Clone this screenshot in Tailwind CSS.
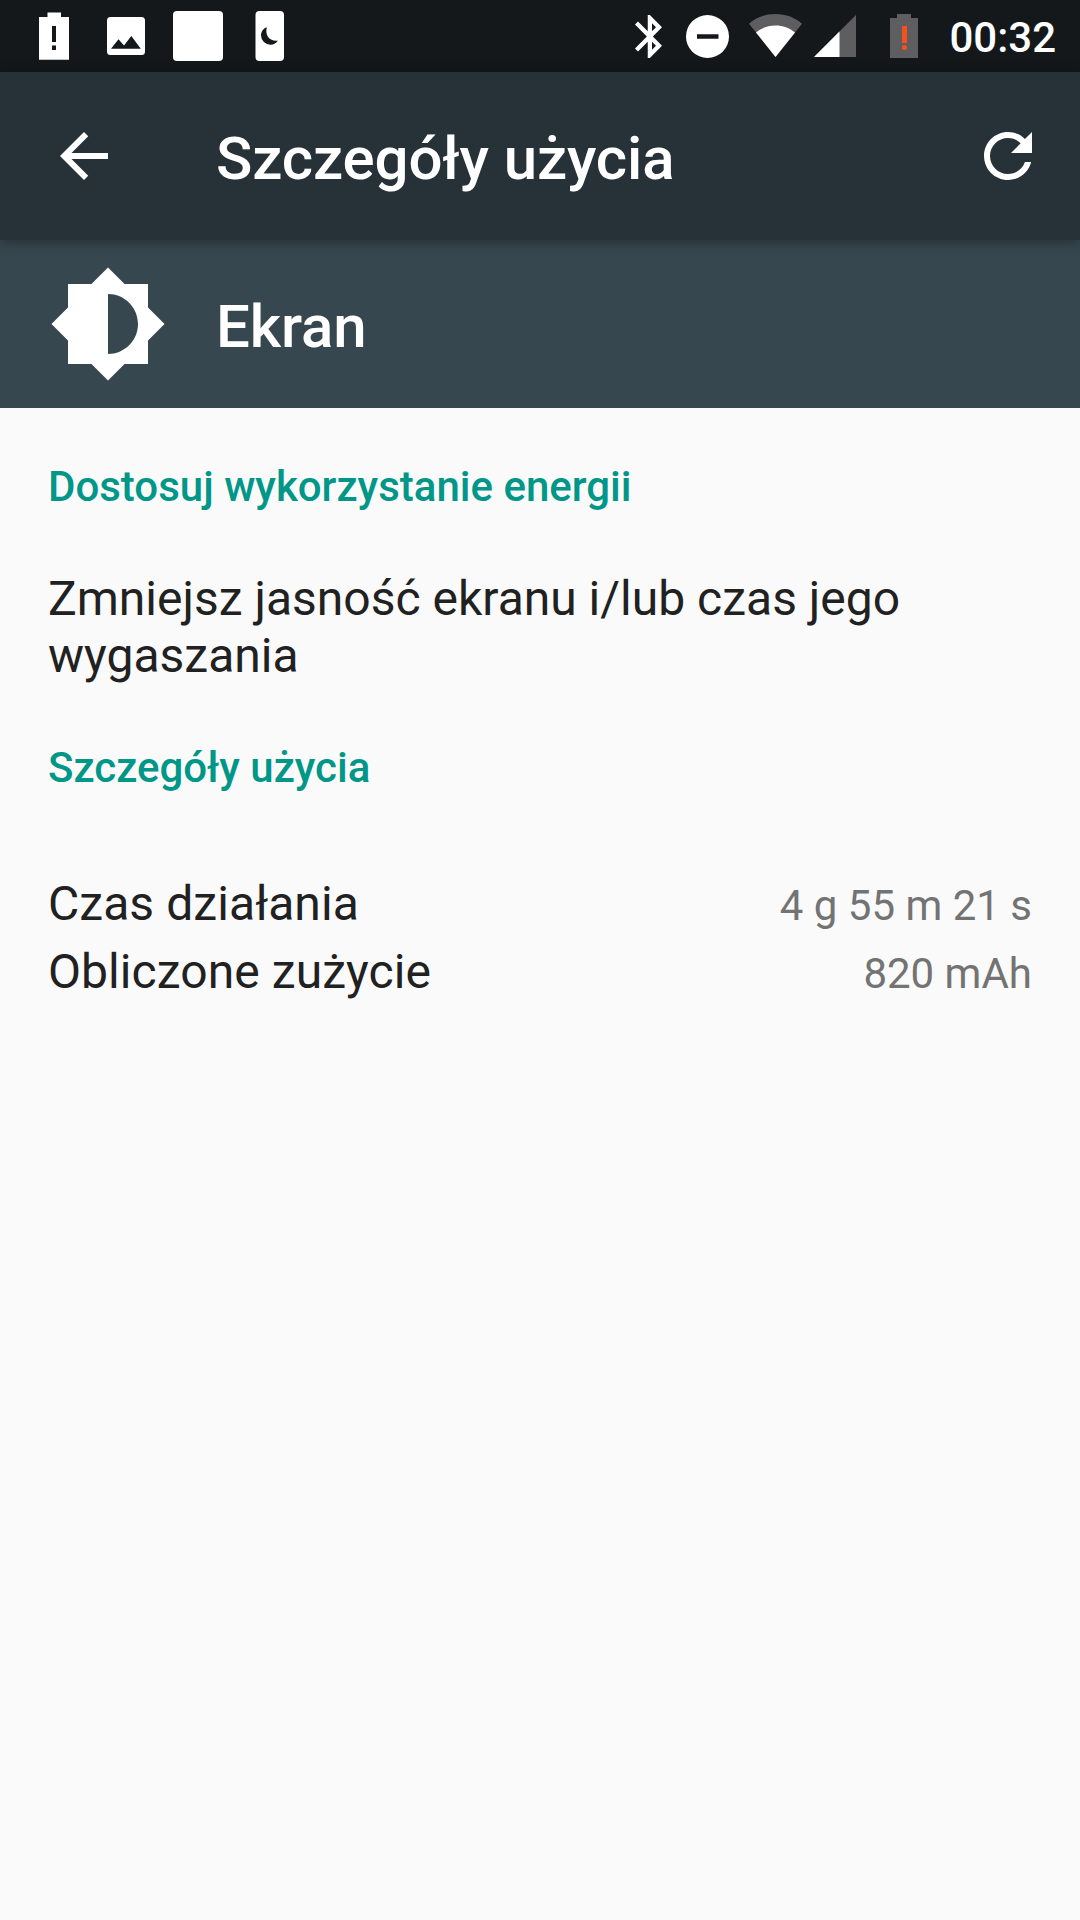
<!DOCTYPE html>
<html lang="pl">
    <head>
        <title>Szczegóły użycia</title>
        <meta charset="UTF-8" />
        <meta name="viewport" content="width=device-width, initial-scale=1.0" />
        <script src="https://cdn.jsdelivr.net/npm/@tailwindcss/browser@4"></script>
    </head>
    <body class="bg-[#fafafa]">
        <div class="flex flex-col w-full min-h-screen bg-[#fafafa] text-[#212121] font-['Roboto',sans-serif]">
            <!-- status bar -->
            <div class="flex justify-between h-[72px] pl-[39px] pr-6 bg-[#14181b] text-white">
                <div class="flex">
                    <svg class="w-[30px] h-[72px] mr-[38px]" viewBox="0 0 30 72" fill="currentColor">
                        <path fill-rule="evenodd" d="M8.500 12.500h13.500v4.500h8v42.700H0V17h8.500zM13 26v16h4V26zM13 45.500v4.500h4v-4.500z" />
                    </svg>
                    <svg class="w-[38px] h-[72px] mr-[28px]" viewBox="0 0 38 72" fill="currentColor">
                        <path fill-rule="evenodd" d="M3.500 17h31q3.500 0 3.500 3.500v31q0 3.500-3.500 3.500h-31Q0 55 0 51.500v-31Q0 17 3.500 17zM4 48.700h29.800L24.300 36l-7.300 9.500-5.500-6.200z" />
                    </svg>
                    <div class="w-[50px] h-[50px] mt-[11px] mr-[32px] rounded-[4px] bg-white"></div>
                    <svg class="w-[29px] h-[72px]" viewBox="0 0 29 72" fill="currentColor">
                        <rect x=".5" y="11" width="28.500" height="50" rx="4" />
                        <path fill="#14181b" d="M11.800 27.300C8 28.600 6 32 6 35.500a9.500 9.500 0 0 0 9.500 9.300c3.400 0 6-1.700 7.400-4.200-6.600 1.400-13.500-4-11.100-13.300z" />
                    </svg>
                </div>
                <div class="flex">
                    <svg class="w-[27px] h-[43px] mt-[15px] mr-[24px]" viewBox="5 2 12.710 20" preserveAspectRatio="none" fill="currentColor">
                        <path d="M17.710 7.710L12 2h-1v7.590L6.410 5 5 6.410 10.590 12 5 17.590 6.410 19 11 14.410V22h1l5.710-5.710-4.300-4.290 4.300-4.290zM13 5.830l1.880 1.880L13 9.590V5.830zm1.880 10.460L13 18.170v-3.760l1.880 1.880z" />
                    </svg>
                    <svg class="w-[43px] h-[72px] mr-[20px]" viewBox="0 0 43 72" fill="currentColor">
                        <path fill-rule="evenodd" d="M21.500 15a21.500 21.500 0 1 1 0 43 21.500 21.500 0 0 1 0-43zM11 34.200v4.600h21.500v-4.600z" />
                    </svg>
                    <svg class="w-[53px] h-[72px] mr-[12px]" viewBox="0 0 53 72">
                        <path fill="#5e5e60" d="M0 23.700C7 17.700 16 14 26.500 14S46 17.700 53 23.700L26.500 57z" />
                        <path fill="#fff" d="M7 32.500c5.500-4.500 12-7 19.500-7s14 2.500 19.500 7L26.500 57z" />
                    </svg>
                    <svg class="w-[42px] h-[72px] mr-[34px]" viewBox="0 0 42 72">
                        <path fill="#5e5e60" d="M42 15v42H0z" />
                        <path fill="#fff" d="M25.500 31.500V57H0z" />
                    </svg>
                    <svg class="w-[28px] h-[72px] mr-[31px]" viewBox="0 0 28 72">
                        <path fill="#5e5e60" d="M7 14h14v4h7v40H0V18h7z" />
                        <path fill="#f4511e" d="M12 26h5v17h-5zM12 46.500l1.500-1.500h2l1.500 1.500v2L15.500 50h-2L12 48.500z" />
                    </svg>
                    <span class="pt-[2px] text-[42px] leading-[72px] font-medium">00:32</span>
                </div>
            </div>

            <!-- app bar -->
            <div class="relative flex items-center h-[168px] pl-12 pr-9 bg-[#263238] text-white shadow-[0_2px_12px_rgba(0,0,0,0.35)]">
                <svg class="size-[72px] mr-24" viewBox="0 0 24 24" fill="currentColor">
                    <path d="M20 11H7.830l5.590-5.590L12 4l-8 8 8 8 1.410-1.410L7.830 13H20v-2z" />
                </svg>
                <h1 class="flex-1 pt-[5px] text-6xl leading-[72px] font-medium tracking-[-0.13px]">Szczegóły użycia</h1>
                <svg class="size-[72px]" viewBox="0 0 24 24" fill="currentColor">
                    <path d="M17.650 6.350C16.200 4.900 14.210 4 12 4c-4.420 0-7.990 3.580-7.990 8s3.570 8 7.990 8c3.730 0 6.840-2.550 7.730-6h-2.080c-.820 2.330-3.040 4-5.650 4-3.310 0-6-2.690-6-6s2.690-6 6-6c1.660 0 3.140.690 4.220 1.780L13 11h7V4l-2.350 2.350z" />
                </svg>
            </div>

            <div class="flex items-center h-[168px] px-12 bg-[#37474f] text-white">
                <svg class="size-[120px] mr-12" viewBox="0 0 24 24" fill="currentColor">
                    <path d="M20 15.310L23.310 12 20 8.690V4h-4.690L12 .690 8.690 4H4v4.690L.690 12 4 15.310V20h4.690L12 23.310 15.310 20H20v-4.690zM12 18V6c3.310 0 6 2.690 6 6s-2.690 6-6 6z" />
                </svg>
                <h2 class="pt-[5px] text-6xl leading-[72px] font-medium tracking-[-0.13px]">Ekran</h2>
            </div>

            <div class="px-12 pt-[55px]">
                <h3 class="text-[42px] leading-12 font-medium text-[#009688]">Dostosuj wykorzystanie energii</h3>
                <p class="mt-[59px] text-5xl leading-[57px]">Zmniejsz jasność ekranu i/lub czas jego wygaszania</p>
                <h3 class="mt-[60px] text-[42px] leading-12 font-medium text-[#009688]">Szczegóły użycia</h3>
                <div class="mt-[78px]">
                    <div class="flex items-baseline justify-between h-[68px]">
                        <span class="text-5xl leading-[68px] tracking-[0.07px]">Czas działania</span>
                        <span class="text-[42px] leading-12 text-[#737373]">4 g 55 m 21 s</span>
                    </div>
                    <div class="flex items-baseline justify-between h-[68px]">
                        <span class="text-5xl leading-[68px] tracking-[0.07px]">Obliczone zużycie</span>
                        <span class="text-[42px] leading-12 text-[#737373]">820 mAh</span>
                    </div>
                </div>
            </div>
        </div>
    </body>
</html>
